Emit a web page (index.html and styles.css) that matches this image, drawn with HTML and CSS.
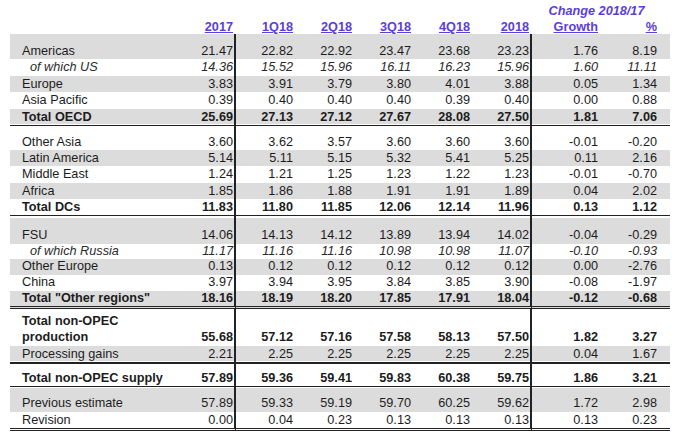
FILE: index.html
```html
<!DOCTYPE html>
<html>
<head>
<meta charset="utf-8">
<link rel="stylesheet" href="styles.css">
</head>
<body>
<div class="tbl">
  <div class="hrow h1">
    <div class="change">Change 2018/17</div>
  </div>
  <div class="hrow h2">
    <div class="lbl"></div>
    <div><u>2017</u></div><div><u>1Q18</u></div><div><u>2Q18</u></div><div><u>3Q18</u></div><div><u>4Q18</u></div><div><u>2018</u></div><div><u>Growth</u></div><div><u>%</u></div><div></div>
  </div>

  <div class="blk b1">
    <div class="row sh sp-a"><div class="lbl">Americas</div><div class="v">21.47</div><div>22.82</div><div>22.92</div><div>23.47</div><div>23.68</div><div class="v">23.23</div><div>1.76</div><div>8.19</div><div class="t"></div></div>
    <div class="row it"><div class="lbl">of which US</div><div class="v">14.36</div><div>15.52</div><div>15.96</div><div>16.11</div><div>16.23</div><div class="v">15.96</div><div>1.60</div><div>11.11</div><div class="t"></div></div>
    <div class="row sh"><div class="lbl">Europe</div><div class="v">3.83</div><div>3.91</div><div>3.79</div><div>3.80</div><div>4.01</div><div class="v">3.88</div><div>0.05</div><div>1.34</div><div class="t"></div></div>
    <div class="row"><div class="lbl">Asia Pacific</div><div class="v">0.39</div><div>0.40</div><div>0.40</div><div>0.40</div><div>0.39</div><div class="v">0.40</div><div>0.00</div><div>0.88</div><div class="t"></div></div>
    <div class="row sh shb bd ln1"><div class="lbl">Total OECD</div><div class="v">25.69</div><div>27.13</div><div>27.12</div><div>27.67</div><div>28.08</div><div class="v">27.50</div><div>1.81</div><div>7.06</div><div class="t"></div></div>
  </div>

  <div class="blk b2">
    <div class="row sp-b"><div class="lbl">Other Asia</div><div class="v">3.60</div><div>3.62</div><div>3.57</div><div>3.60</div><div>3.60</div><div class="v">3.60</div><div>-0.01</div><div>-0.20</div><div class="t"></div></div>
    <div class="row sh"><div class="lbl">Latin America</div><div class="v">5.14</div><div>5.11</div><div>5.15</div><div>5.32</div><div>5.41</div><div class="v">5.25</div><div>0.11</div><div>2.16</div><div class="t"></div></div>
    <div class="row"><div class="lbl">Middle East</div><div class="v">1.24</div><div>1.21</div><div>1.25</div><div>1.23</div><div>1.22</div><div class="v">1.23</div><div>-0.01</div><div>-0.70</div><div class="t"></div></div>
    <div class="row sh"><div class="lbl">Africa</div><div class="v">1.85</div><div>1.86</div><div>1.88</div><div>1.91</div><div>1.91</div><div class="v">1.89</div><div>0.04</div><div>2.02</div><div class="t"></div></div>
    <div class="row bd ln1"><div class="lbl">Total DCs</div><div class="v">11.83</div><div>11.80</div><div>11.85</div><div>12.06</div><div>12.14</div><div class="v">11.96</div><div>0.13</div><div>1.12</div><div class="t"></div></div>
  </div>

  <div class="blk b3">
    <div class="row sht sp-c"><div class="lbl">FSU</div><div class="v">14.06</div><div>14.13</div><div>14.12</div><div>13.89</div><div>13.94</div><div class="v">14.02</div><div>-0.04</div><div>-0.29</div><div class="t"></div></div>
    <div class="row it"><div class="lbl">of which Russia</div><div class="v">11.17</div><div>11.16</div><div>11.16</div><div>10.98</div><div>10.98</div><div class="v">11.07</div><div>-0.10</div><div>-0.93</div><div class="t"></div></div>
    <div class="row sh"><div class="lbl">Other Europe</div><div class="v">0.13</div><div>0.12</div><div>0.12</div><div>0.12</div><div>0.12</div><div class="v">0.12</div><div>0.00</div><div>-2.76</div><div class="t"></div></div>
    <div class="row"><div class="lbl">China</div><div class="v">3.97</div><div>3.94</div><div>3.95</div><div>3.84</div><div>3.85</div><div class="v">3.90</div><div>-0.08</div><div>-1.97</div><div class="t"></div></div>
    <div class="row sh bd dbl"><div class="lbl">Total "Other regions"</div><div class="v">18.16</div><div>18.19</div><div>18.20</div><div>17.85</div><div>17.91</div><div class="v">18.04</div><div>-0.12</div><div>-0.68</div><div class="t"></div></div>
  </div>

  <div class="blk b4">
    <div class="row bd prod"><div class="lbl">Total non-OPEC<br>production</div><div class="v">55.68</div><div>57.12</div><div>57.16</div><div>57.58</div><div>58.13</div><div class="v">57.50</div><div>1.82</div><div>3.27</div><div class="t"></div></div>
    <div class="row sh shb ln2 pg"><div class="lbl">Processing gains</div><div class="v">2.21</div><div>2.25</div><div>2.25</div><div>2.25</div><div>2.25</div><div class="v">2.25</div><div>0.04</div><div>1.67</div><div class="t"></div></div>
    <div class="row bd ln1 sup"><div class="lbl">Total non-OPEC supply</div><div class="v">57.89</div><div>59.36</div><div>59.41</div><div>59.83</div><div>60.38</div><div class="v">59.75</div><div>1.86</div><div>3.21</div><div class="t"></div></div>
    <div class="row sht1 sp-d"><div class="lbl">Previous estimate</div><div class="v">57.89</div><div>59.33</div><div>59.19</div><div>59.70</div><div>60.25</div><div class="v">59.62</div><div>1.72</div><div>2.98</div><div class="t"></div></div>
    <div class="row dbl rev"><div class="lbl">Revision</div><div class="v">0.00</div><div>0.04</div><div>0.23</div><div>0.13</div><div>0.13</div><div class="v">0.13</div><div>0.13</div><div>0.23</div><div class="t"></div></div>
  </div>
</div>
</body>
</html>
```

FILE: styles.css
```css
body {
  margin: 0;
  background: #fff;
  font-family: "Liberation Sans", Arial, sans-serif;
  font-size: 12.7px;
  color: #1c1c1c;
}

.tbl {
  margin-left: 10px;
  width: 660px;
}

.hrow,
.row {
  display: grid;
  grid-template-columns: 165px 61px 59px 59px 59px 59px 60px 68px 59px 11px;
}

.hrow {
  color: #5b3ddb;
  font-weight: bold;
}

.h1 {
  height: 20px;
}

.h1 .change {
  grid-column: 8 / 10;
  text-align: center;
  font-style: italic;
  line-height: 18px;
  padding-top: 2px;
  padding-left: 2px;
}

.h2 > div {
  line-height: 14px;
  text-align: right;
  padding-right: 2px;
  white-space: nowrap;
}

.h2 > div:nth-child(2),
.h2 > div:nth-child(7) {
  padding-right: 3px;
}

.row > div {
  text-align: right;
  padding-right: 2px;
  white-space: nowrap;
  line-height: var(--lh);
  padding-top: var(--pt, 0px);
}

.row > .lbl {
  text-align: left;
  padding-left: 12px;
}

.row > .v {
  border-right: 2px solid #222;
  padding-right: 1px;
}

.b1 { --lh: 16.5px; }
.b2 { --lh: 16.3px; }
.b3 { --lh: 15.7px; }
.b4 { --lh: 16.5px; }

.sp-a { --pt: 8.5px; }
.sp-b { --pt: 7.7px; }
.sp-c { --pt: 11.8px; }
.sp-d { --pt: 8px; }

.sh > div {
  background: #dcdcdc;
}

.shb > div {
  background: linear-gradient(to top, #fff 0 1px, #dcdcdc 1px);
}

.sht > div {
  background: linear-gradient(to bottom, #fff 0 2px, #dcdcdc 2px);
}

.sht1 > div {
  background: linear-gradient(to bottom, #fff 0 1px, #dcdcdc 1px);
}

.bd > div {
  font-weight: bold;
}

.it > div {
  font-style: italic;
  color: #2a2a2a;
}

.it > .lbl {
  padding-left: 20px;
}

.ln1 > div {
  border-bottom: 1px solid #222;
}

.ln2 > div {
  border-bottom: 2px solid #222;
}

.dbl > div {
  border-bottom: 3px double #222;
}

.prod > div {
  padding-top: 20px;
}

.prod > .lbl {
  padding-top: 3.5px;
}

.pg { --lh: 16px; }

.sup { --lh: 15.5px; --pt: 7px; }

.rev { --lh: 16px; }
```
